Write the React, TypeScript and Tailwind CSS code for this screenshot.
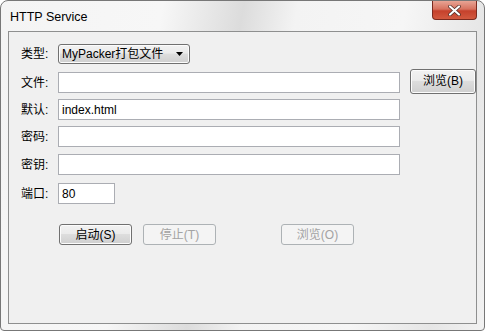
import React from "react";

const font = { fontFamily: '"Liberation Sans", "Noto Sans CJK SC", sans-serif' };

function Field({ label, value, className }: { label: string; value?: string; className?: string }) {
  return (
    <div className="flex items-center h-[21px]">
      <span className="w-[37px] text-[12px] text-black">{label}</span>
      <div
        className={`h-[21px] border border-[#abadb3] border-t-[#abadb3] bg-white flex items-center pl-[3px] text-[12px] text-black ${className ?? "w-[342px]"}`}
      >
        {value}
      </div>
    </div>
  );
}

function Btn({ children, disabled, className }: { children: React.ReactNode; disabled?: boolean; className?: string }) {
  return (
    <div
      className={
        disabled
          ? `w-[73px] h-[21px] rounded-[3px] border border-[#adb2b5] bg-[#f4f4f4] text-[#a3a3a3] text-[12px] flex items-center justify-center ${className ?? ""}`
          : `w-[73px] h-[21px] rounded-[3px] border border-[#707070] bg-[linear-gradient(#f2f2f2_0%,#ebebeb_45%,#dddddd_50%,#cfcfcf_100%)] shadow-[inset_0_0_0_1px_#fcfcfc] text-black text-[12px] flex items-center justify-center ${className ?? ""}`
      }
    >
      {children}
    </div>
  );
}

export default function App() {
  return (
    <div style={font} className="w-[485px] h-[331px] bg-white">
      <div className="w-[485px] h-[331px] rounded-t-[8px] rounded-b-[4px] border border-[#777] bg-[linear-gradient(100deg,#f4f4f4_0%,#f7f7f7_30%,#dcdcdc_45%,#f3f3f3_55%,#f6f6f6_75%,#e6e6e6_90%,#f2f2f2_100%)] flex flex-col">
        <div className="h-[29px] flex justify-between">
          <span className="pl-[9px] pt-[7px] text-[12.5px] text-black">HTTP Service</span>
          <div className="mr-[7px] w-[45px] h-[19px] rounded-b-[4px] border border-t-0 border-[#7a2a1f] bg-[linear-gradient(#e8a494_0%,#d7725f_45%,#c5412c_55%,#d2593f_100%)] flex items-center justify-center">
            <svg width="13" height="11" viewBox="0 0 13 11">
              <path d="M2 1.5 L11 9.5 M11 1.5 L2 9.5" stroke="#4a2a24" strokeWidth="3.6" strokeLinecap="round" />
              <path d="M2 1.5 L11 9.5 M11 1.5 L2 9.5" stroke="#ffffff" strokeWidth="2.2" strokeLinecap="round" />
            </svg>
          </div>
        </div>
        <div className="mx-[7px] mt-[1px] h-[293px] border border-[#8e8f8f] bg-[#f0f0f0] pl-[12px] pt-[12px]">
          <div className="flex items-center h-[20px]">
            <span className="w-[37px] text-[12px] text-black">类型:</span>
            <div className="w-[132px] h-[20px] rounded-[3px] border border-[#707070] bg-[linear-gradient(#f2f2f2_0%,#ebebeb_45%,#dddddd_50%,#cfcfcf_100%)] shadow-[inset_0_0_0_1px_#fcfcfc] flex items-center justify-between pl-[3px] pr-[6px] text-[12px] text-black">
              <span>MyPacker打包文件</span>
              <svg width="7" height="4" viewBox="0 0 7 4">
                <path d="M0 0 H7 L3.5 4 Z" fill="#000" />
              </svg>
            </div>
          </div>
          <div className="mt-[8px] flex items-center h-[21px]">
            <Field label="文件:" />
            <Btn className="ml-[10px] w-[54px] h-[25px] -mt-[3px]">浏览(B)</Btn>
          </div>
          <div className="mt-[6px]">
            <Field label="默认:" value="index.html" />
          </div>
          <div className="mt-[6px]">
            <Field label="密码:" />
          </div>
          <div className="mt-[7px]">
            <Field label="密钥:" />
          </div>
          <div className="mt-[8px]">
            <Field label="端口:" value="80" className="w-[57px]" />
          </div>
          <div className="mt-[20px] ml-[38px] flex">
            <Btn>启动(S)</Btn>
            <Btn disabled className="ml-[11px]">停止(T)</Btn>
            <Btn disabled className="ml-[65px]">浏览(O)</Btn>
          </div>
        </div>
      </div>
    </div>
  );
}
